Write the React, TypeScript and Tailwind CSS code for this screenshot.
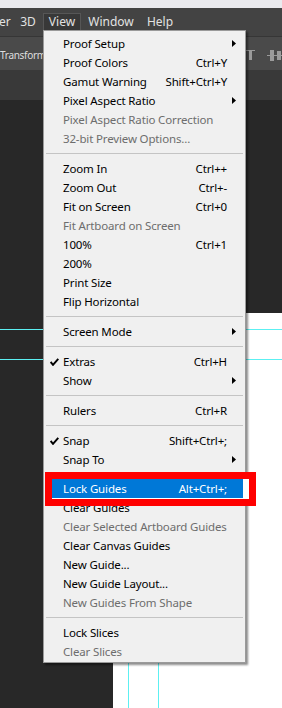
import React from "react"

type Item =
    | { kind: "sep"; h?: number }
    | { kind: "item"; label: string; shortcut?: string; sub?: boolean; disabled?: boolean; checked?: boolean; active?: boolean }

const items: Item[] = [
    { kind: "item", label: "Proof Setup", sub: true },
    { kind: "item", label: "Proof Colors", shortcut: "Ctrl+Y" },
    { kind: "item", label: "Gamut Warning", shortcut: "Shift+Ctrl+Y" },
    { kind: "item", label: "Pixel Aspect Ratio", sub: true },
    { kind: "item", label: "Pixel Aspect Ratio Correction", disabled: true },
    { kind: "item", label: "32-bit Preview Options...", disabled: true },
    { kind: "sep" },
    { kind: "item", label: "Zoom In", shortcut: "Ctrl++" },
    { kind: "item", label: "Zoom Out", shortcut: "Ctrl+-" },
    { kind: "item", label: "Fit on Screen", shortcut: "Ctrl+0" },
    { kind: "item", label: "Fit Artboard on Screen", disabled: true },
    { kind: "item", label: "100%", shortcut: "Ctrl+1" },
    { kind: "item", label: "200%" },
    { kind: "item", label: "Print Size" },
    { kind: "item", label: "Flip Horizontal" },
    { kind: "sep" },
    { kind: "item", label: "Screen Mode", sub: true },
    { kind: "sep" },
    { kind: "item", label: "Extras", shortcut: "Ctrl+H", checked: true },
    { kind: "item", label: "Show", sub: true },
    { kind: "sep" },
    { kind: "item", label: "Rulers", shortcut: "Ctrl+R" },
    { kind: "sep" },
    { kind: "item", label: "Snap", shortcut: "Shift+Ctrl+;", checked: true },
    { kind: "item", label: "Snap To", sub: true },
    { kind: "sep", h: 10 },
    { kind: "item", label: "Lock Guides", shortcut: "Alt+Ctrl+;", active: true },
    { kind: "item", label: "Clear Guides" },
    { kind: "item", label: "Clear Selected Artboard Guides", disabled: true },
    { kind: "item", label: "Clear Canvas Guides" },
    { kind: "item", label: "New Guide..." },
    { kind: "item", label: "New Guide Layout..." },
    { kind: "item", label: "New Guides From Shape", disabled: true },
    { kind: "sep" },
    { kind: "item", label: "Lock Slices" },
    { kind: "item", label: "Clear Slices", disabled: true },
]

function Check() {
    return (
        <svg width="9" height="8" viewBox="0 0 9 8" className="absolute left-[6px] top-[6px]">
            <path d="M0.6 4 L3 6.8 L8.3 0.8" fill="none" stroke="#000" strokeWidth="2" />
        </svg>
    )
}

function Arrow({ white }: { white?: boolean }) {
    return (
        <svg width="5" height="7" viewBox="0 0 5 7" className="absolute right-[8px] top-[6px]">
            <path d="M0 0 L4 3.5 L0 7 Z" fill={white ? "#fff" : "#000"} />
        </svg>
    )
}

function MenuRow({ item }: { item: Item }) {
    if (item.kind === "sep") {
        return (
            <div className={item.h === 10 ? "flex h-[10px] items-center px-[2px]" : "flex h-[11px] items-center px-[2px]"}>
                <div className="h-px w-full bg-[#c4c4c4]" />
            </div>
        )
    }
    const color = item.active ? "text-white" : item.disabled ? "text-[#6d6d6d]" : "text-black"
    return (
        <div className={`relative flex h-[19px] items-center pl-[19px] pr-[18px] ${color}`}>
            {item.active && <div className="absolute inset-y-0 left-[2px] right-[2px] bg-[#0078d7]" />}
            {item.checked && <Check />}
            <span className="relative flex-1 whitespace-nowrap">{item.label}</span>
            {item.shortcut && <span className="relative whitespace-nowrap">{item.shortcut}</span>}
            {item.sub && <Arrow white={item.active} />}
        </div>
    )
}

function AlignIcons() {
    return (
        <div className="absolute right-0 top-[12px] flex items-start gap-[12px]">
            <svg width="9" height="12" viewBox="0 0 9 12">
                <rect x="0" y="1" width="9" height="1" fill="#9b9b9b" />
                <rect x="3" y="1" width="3" height="10" fill="#9b9b9b" />
            </svg>
            <svg width="15" height="12" viewBox="0 0 15 12">
                <rect x="0" y="6" width="15" height="1" fill="#9b9b9b" />
                <rect x="3" y="1" width="4" height="11" fill="#9b9b9b" />
                <rect x="10" y="2" width="4" height="9" fill="#9b9b9b" />
            </svg>
        </div>
    )
}

export default function App() {
    return (
        <div className="relative flex h-[708px] w-[282px] flex-col overflow-hidden bg-[#282828] font-['Segoe_UI','Noto_Sans',sans-serif] text-[12px] leading-none">
            {/* window title strip */}
            <div className="h-[8px] shrink-0 bg-[#eaeaee]" />

            {/* menu bar */}
            <div className="flex h-[28px] shrink-0 items-start bg-[#434343] text-[#e2e2e2]">
                <div className="-ml-[1px] mt-[5px] flex h-[17px] w-[14px] items-center">er</div>
                <div className="mt-[5px] flex h-[17px] w-[30px] items-center justify-center">3D</div>
                <div className="mt-[5px] flex h-[17px] w-[38px] items-center justify-center border border-b-0 border-[#565656] bg-[#383838]">View</div>
                <div className="mt-[5px] flex h-[17px] w-[60px] items-center justify-center">Window</div>
                <div className="mt-[5px] flex h-[17px] w-[38px] items-center justify-center">Help</div>
            </div>

            {/* options bar */}
            <div className="relative h-[34px] shrink-0 border-t border-[#363636] bg-[#4a4a4a] text-[10px] tracking-[-0.3px] text-[#dedede]">
                <div className="w-[43px] pt-[13px] whitespace-nowrap">Transform</div>
                <AlignIcons />
            </div>

            {/* document tab strip */}
            <div className="h-[30px] shrink-0 bg-[#393939]" />

            {/* workspace */}
            <div className="relative flex flex-1 flex-col pl-[113px] pt-[213px]">
                <div className="flex-1 bg-white" />
                <div className="absolute left-0 right-0 top-[229px] h-px bg-[#5cf0f2]" />
                <div className="absolute left-0 right-0 top-[259px] h-px bg-[#5cf0f2]" />
                <div className="absolute bottom-0 left-[128px] top-[213px] w-px bg-[#5cf0f2]" />
                <div className="absolute bottom-0 left-[158px] top-[213px] w-px bg-[#5cf0f2]" />
            </div>

            {/* View dropdown */}
            <div className="absolute left-[43px] top-[30px] w-[203px] border border-[#9a9a9a] bg-[#f0f0f0] pb-[1px] pt-[3px] text-[11.5px] tracking-[-0.15px] shadow-[2px_2px_2px_rgba(0,0,0,0.45)]">
                {items.map((item, i) => (
                    <MenuRow key={i} item={item} />
                ))}
            </div>

            {/* annotation box */}
            <div className="absolute left-[45px] top-[472px] h-[34px] w-[211px] border-[7px] border-[#ff0000] shadow-[inset_-6px_-1px_0_#ffffff]" />
        </div>
    )
}
